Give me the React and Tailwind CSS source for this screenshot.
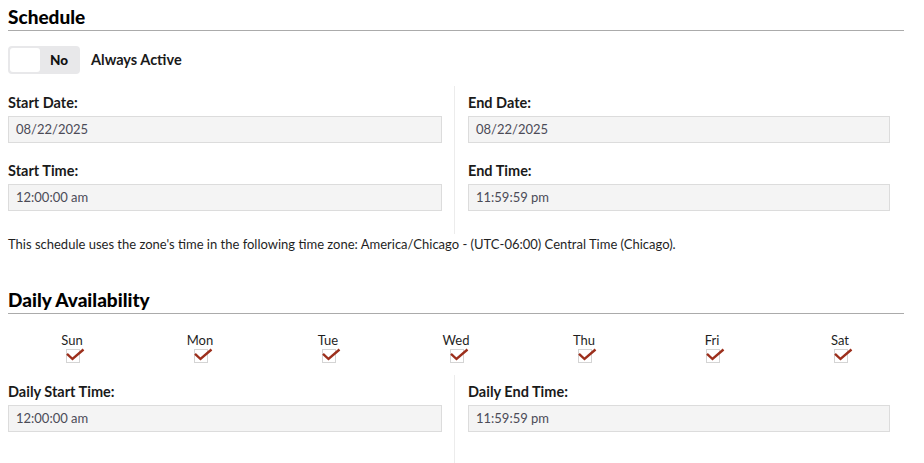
import React from 'react';

const days = ['Sun', 'Mon', 'Tue', 'Wed', 'Thu', 'Fri', 'Sat'];

const Field = ({ label, value }) => (
  <div>
    <div className="text-[14.5px] font-bold text-[#1a1a1a] leading-4">{label}</div>
    <div className="mt-[5px] h-[27px] border border-[#dcdcdc] bg-[#f4f4f4] px-[7px] flex items-center text-[13px] text-[#4b4b57]">
      {value}
    </div>
  </div>
);

const SectionTitle = ({ children }) => (
  <div className="border-b border-[#ababab] pb-[1px]">
    <h2 className="text-[19px] font-black leading-6 text-black">{children}</h2>
  </div>
);

const DayCheck = ({ day }) => (
  <div className="flex flex-col items-center">
    <span className="text-[13px] leading-[14px] text-[#1f1f1f]">{day}</span>
    <svg width="20" height="17" viewBox="0 0 20 17" className="ml-[7px] -mt-[1px]">
      <rect x="0.5" y="3.5" width="13" height="13" fill="#fff" stroke="#d4d4d4" />
      <path d="M1 7.8 L6.5 13 L17.5 3.5" fill="none" stroke="#9c2f1c" strokeWidth="2.4" strokeLinecap="butt" />
    </svg>
  </div>
);

export default function App() {
  return (
    <div className="w-[924px] h-[463px] overflow-hidden bg-white pl-2 pr-5 pt-[5px]" style={{ fontFamily: 'Lato, "Open Sans", sans-serif' }}>
      <SectionTitle>Schedule</SectionTitle>

      {/* Always active toggle */}
      <div className="mt-[15px] flex items-center gap-[11px]">
        <div className="w-[72px] h-[28px] rounded-[4px] bg-[#e8e8ea] p-[2px] flex items-center">
          <div className="w-[30px] h-[24px] rounded-[3px] bg-white" />
          <span className="flex-1 text-center text-[13.5px] font-black text-[#111]">No</span>
        </div>
        <span className="text-[14.5px] font-bold text-[#1a1a1a]">Always Active</span>
      </div>

      <div className="flex mt-[12px]">
        <div className="w-[446px] pr-3 pt-[9px] flex flex-col gap-[20px]">
          <Field label="Start Date:" value="08/22/2025" />
          <Field label="Start Time:" value="12:00:00 am" />
        </div>
        <div className="w-[450px] border-l border-[#ececec] pl-[13px] pr-[14px] pt-[9px] pb-[23px] flex flex-col gap-[20px]">
          <Field label="End Date:" value="08/22/2025" />
          <Field label="End Time:" value="11:59:59 pm" />
        </div>
      </div>

      <p className="text-[13px] leading-4 text-[#1f1f1f] mt-[2px]">
        This schedule uses the zone's time in the following time zone: America/Chicago - (UTC-06:00) Central Time (Chicago).
      </p>

      <div className="mt-[36px]">
        <SectionTitle>Daily Availability</SectionTitle>
      </div>

      <div className="grid grid-cols-7 mt-[19px]">
        {days.map((d) => (
          <DayCheck key={d} day={d} />
        ))}
      </div>

      <div className="flex mt-[12px]">
        <div className="w-[446px] pr-3 pt-[9px]">
          <Field label="Daily Start Time:" value="12:00:00 am" />
        </div>
        <div className="w-[450px] h-[90px] border-l border-[#ececec] pl-[13px] pr-[14px] pt-[9px]">
          <Field label="Daily End Time:" value="11:59:59 pm" />
        </div>
      </div>
    </div>
  );
}
